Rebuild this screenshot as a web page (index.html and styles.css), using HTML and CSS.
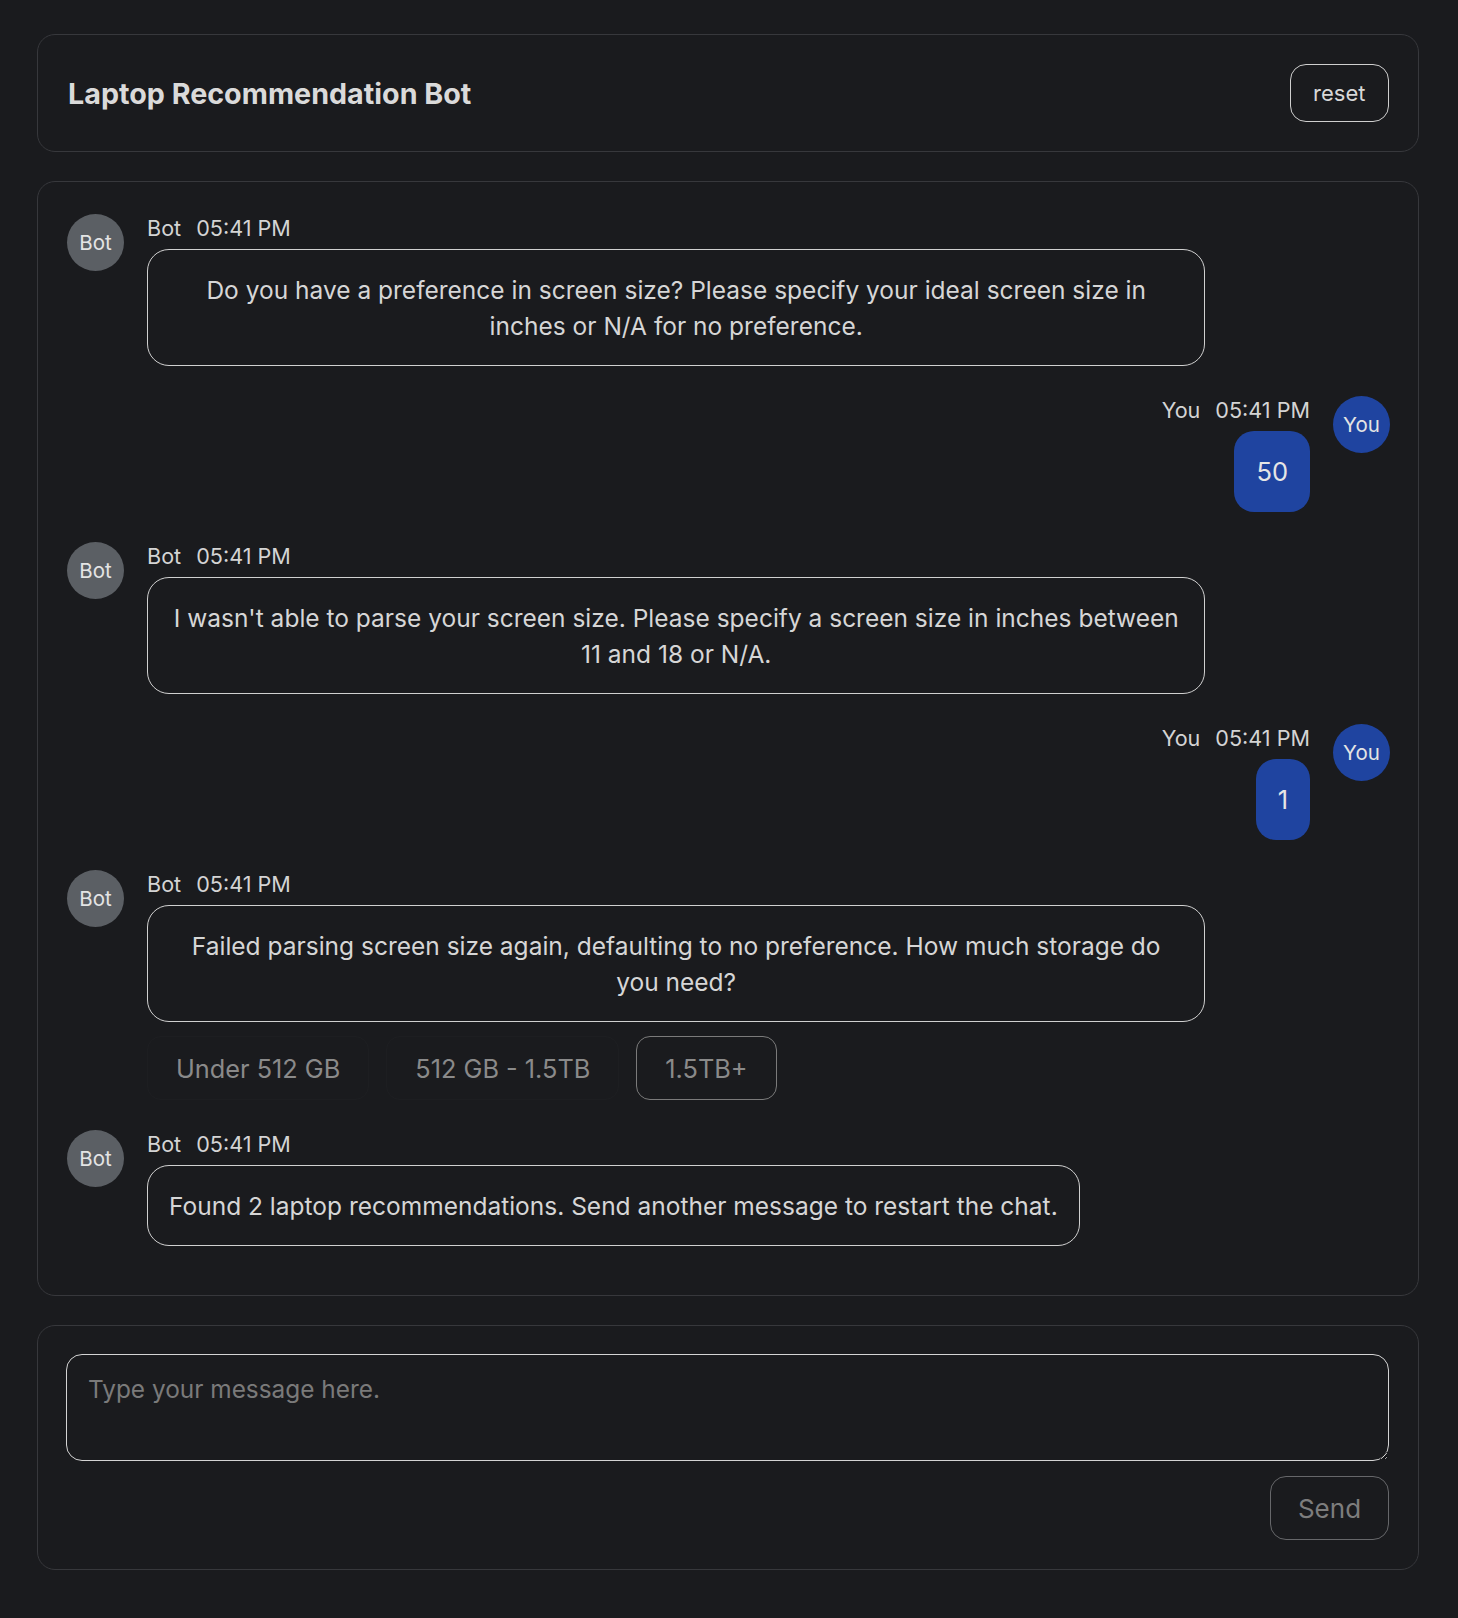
FILE: index.html
```html
<!DOCTYPE html>
<html lang="en">
<head>
<meta charset="utf-8">
<title>Laptop Recommendation Bot</title>
<link rel="stylesheet" href="styles.css">
</head>
<body>
<div class="page">
  <header class="card header">
    <h1 class="title">Laptop Recommendation Bot</h1>
    <button class="btn reset">reset</button>
  </header>

  <section class="card chat">
    <div class="msg bot">
      <div class="avatar">Bot</div>
      <div class="msg-body">
        <div class="meta"><span>Bot</span><span>05:41 PM</span></div>
        <div class="bubble">Do you have a preference in screen size? Please specify your ideal screen size in inches or N/A for no preference.</div>
      </div>
    </div>

    <div class="msg you">
      <div class="avatar">You</div>
      <div class="msg-body">
        <div class="meta"><span>You</span><span>05:41 PM</span></div>
        <div class="bubble">50</div>
      </div>
    </div>

    <div class="msg bot">
      <div class="avatar">Bot</div>
      <div class="msg-body">
        <div class="meta"><span>Bot</span><span>05:41 PM</span></div>
        <div class="bubble">I wasn't able to parse your screen size. Please specify a screen size in inches between 11 and 18 or N/A.</div>
      </div>
    </div>

    <div class="msg you">
      <div class="avatar">You</div>
      <div class="msg-body">
        <div class="meta"><span>You</span><span>05:41 PM</span></div>
        <div class="bubble">1</div>
      </div>
    </div>

    <div class="msg bot">
      <div class="avatar">Bot</div>
      <div class="msg-body">
        <div class="meta"><span>Bot</span><span>05:41 PM</span></div>
        <div class="bubble">Failed parsing screen size again, defaulting to no preference. How much storage do you need?</div>
        <div class="options">
          <button class="option">Under 512 GB</button>
          <button class="option">512 GB - 1.5TB</button>
          <button class="option outlined">1.5TB+</button>
        </div>
      </div>
    </div>

    <div class="msg bot">
      <div class="avatar">Bot</div>
      <div class="msg-body">
        <div class="meta"><span>Bot</span><span>05:41 PM</span></div>
        <div class="bubble">Found 2 laptop recommendations. Send another message to restart the chat.</div>
      </div>
    </div>
  </section>

  <section class="card composer">
    <textarea class="input" placeholder="Type your message here."></textarea>
    <div class="actions">
      <button class="btn send">Send</button>
    </div>
  </section>
</div>
</body>
</html>
```

FILE: styles.css
```css
* { box-sizing: border-box; }

html, body {
  margin: 0;
  padding: 0;
  background: #1a1b1e;
  color: #d6d6d6;
  font-family: Inter, "Noto Sans", "Liberation Sans", sans-serif;
}

.page {
  padding: 34px 39px 45px 37px;
  display: flex;
  flex-direction: column;
  gap: 29px;
}

.card {
  border: 1px solid #37383c;
  border-radius: 18px;
  background: #1a1b1e;
}

.header {
  display: flex;
  align-items: center;
  justify-content: space-between;
  padding: 29px 29px 29px 30px;
}

.title {
  margin: 0;
  font-size: 28.7px;
  font-weight: 700;
  color: #dadada;
  letter-spacing: 0;
}

.btn {
  font-family: inherit;
  background: transparent;
  cursor: pointer;
}

.reset {
  height: 58px;
  padding: 0 22.5px;
  border: 1.5px solid #cfcfcf;
  border-radius: 16px;
  color: #d8d8d8;
  font-size: 22px;
}

.chat {
  padding: 32px 28px 49px 29px;
  display: flex;
  flex-direction: column;
  gap: 30px;
}

.msg {
  display: flex;
  align-items: flex-start;
  gap: 23px;
}

.msg.you {
  flex-direction: row-reverse;
}

.avatar {
  flex: 0 0 57px;
  width: 57px;
  height: 57px;
  border-radius: 50%;
  display: flex;
  align-items: center;
  justify-content: center;
  font-size: 20.5px;
  color: #e4e4e4;
}

.bot .avatar { background: #5b5f64; }
.you .avatar { background: #1f44a0; }

.msg-body {
  flex: 0 1 80%;
  display: flex;
  flex-direction: column;
  align-items: flex-start;
  gap: 7px;
}

.you .msg-body {
  align-items: flex-end;
}

.meta {
  display: flex;
  gap: 15px;
  font-size: 21.6px;
  line-height: 28px;
  color: #d4d4d4;
}

.bubble {
  padding: 21.5px 21px;
  font-size: 24.5px;
  line-height: 36px;
  text-align: center;
  border-radius: 22px;
  color: #d6d6d6;
}

.bot .bubble {
  border: 1.5px solid #d0d0d0;
}

.you .bubble {
  background: #1f44a0;
  color: #e6e6e6;
  font-size: 25.5px;
  padding: 23px 22px 22px;
  border-radius: 20px;
  border: 0;
}

.options {
  display: flex;
  gap: 17px;
  margin-top: 7px;
}

.option {
  height: 64px;
  padding: 0 28px;
  border: 1px solid rgba(255, 255, 255, 0.015);
  border-radius: 14px;
  background: transparent;
  color: #8a8a8a;
  font-family: inherit;
  font-size: 25.3px;
}

.option.outlined {
  border-color: #7b7b7b;
}

.composer {
  padding: 28px 29px 29px 28px;
  display: flex;
  flex-direction: column;
  gap: 15px;
}

.input {
  display: block;
  width: 100%;
  height: 107px;
  padding: 18px 21px;
  border: 1.5px solid #d4d4d4;
  border-radius: 16px;
  background: transparent;
  color: #d6d6d6;
  font-family: inherit;
  font-size: 24.4px;
  line-height: 32px;
  resize: vertical;
  outline: none;
}

.input::placeholder {
  color: #7a7a7a;
}

.actions {
  display: flex;
  justify-content: flex-end;
}

.send {
  width: 119px;
  height: 64px;
  border: 1px solid #66676a;
  border-radius: 16px;
  color: #7d7d7d;
  font-size: 26px;
}
```
